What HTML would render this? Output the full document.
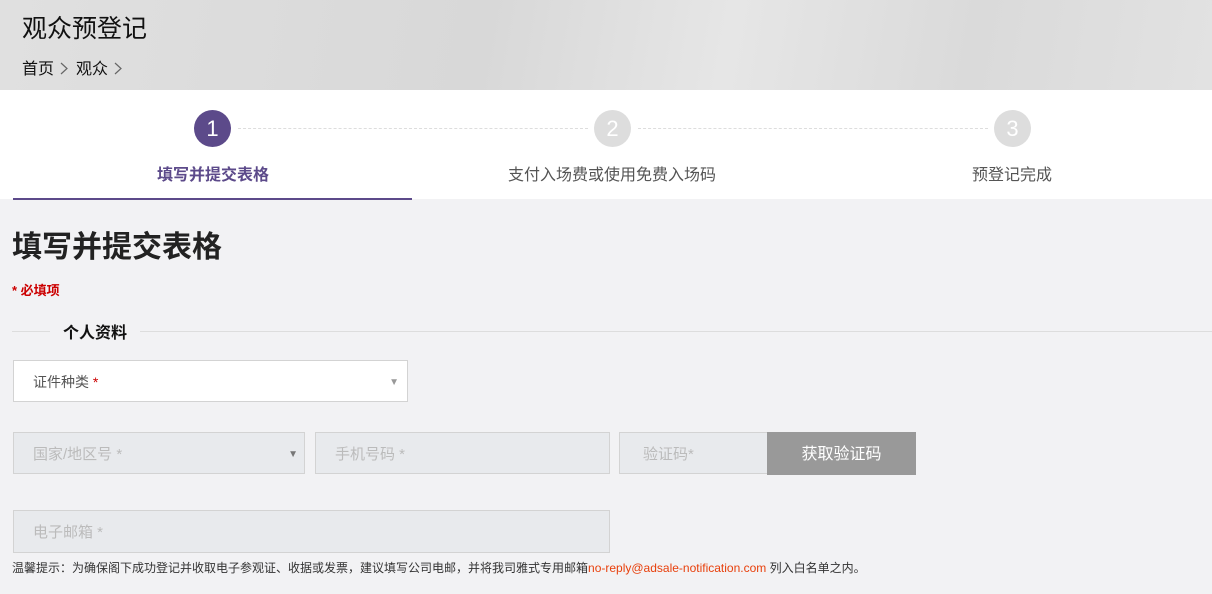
<!DOCTYPE html>
<html><head><meta charset="utf-8"><style>
*{box-sizing:border-box;margin:0;padding:0}
body{width:1212px;height:594px;overflow:hidden;background:#f2f2f4;font-family:"Liberation Sans","Noto Sans CJK SC",sans-serif;position:relative}
.hdr{position:absolute;left:0;top:0;width:1212px;height:90px;background:linear-gradient(100deg,#e0e0e0 0%,#d8d8d8 40%,#e6e6e6 60%,#dadada 80%,#e2e2e2 100%)}
.t{position:absolute;left:22px;top:9px;font-size:25px;color:#111}
.bc{position:absolute;left:22px;top:55px;font-size:16px;color:#111}
.bc svg{margin:0 8px 0 6px;vertical-align:-1px}
.steps{position:absolute;left:0;top:90px;width:1212px;height:109px;background:#fff}
.c{position:absolute;top:20px;width:37px;height:37px;border-radius:50%;background:#ddd;color:#fff;font-size:22px;text-align:center;line-height:37px}
.ln{position:absolute;top:38px;border-top:1px dashed #ddd}
.sl{position:absolute;top:71px;font-size:16px;color:#555;text-align:center;width:400px}
.f{position:absolute;border:1px solid #d3d3d3;background:#e8eaed;font-size:15px;color:#bbb;padding-left:19px;line-height:44px}
</style></head><body>
<div class="hdr"><div class="t">观众预登记</div><div class="bc">首页<svg width="8" height="13" viewBox="0 0 8 13"><path d="M1 1l6 5.5L1 12" fill="none" stroke="#666" stroke-width="1.2"/></svg>观众<svg width="8" height="13" viewBox="0 0 8 13"><path d="M1 1l6 5.5L1 12" fill="none" stroke="#666" stroke-width="1.2"/></svg></div></div>
<div class="steps">
<div class="c" style="left:194px;background:#5c4a8a">1</div>
<div class="ln" style="left:238px;width:350px"></div>
<div class="c" style="left:594px">2</div>
<div class="ln" style="left:638px;width:350px"></div>
<div class="c" style="left:994px">3</div>
<div class="sl" style="left:13px;color:#5c4a8a;font-weight:bold">填写并提交表格</div>
<div class="sl" style="left:412px">支付入场费或使用免费入场码</div>
<div class="sl" style="left:812px">预登记完成</div>
<div style="position:absolute;left:13px;top:108px;width:399px;height:2px;background:#5c4a8a"></div>
</div>
<div style="position:absolute;left:12px;top:222px;font-size:30px;font-weight:bold;color:#222">填写并提交表格</div>
<div style="position:absolute;left:12px;top:280px;font-size:13px;font-weight:bold;color:#c00">* 必填项</div>
<div style="position:absolute;left:12px;top:331px;width:1200px;border-top:1px solid #ddd"></div>
<div style="position:absolute;left:50px;top:319px;padding:0 13px;background:#f2f2f4;font-size:16px;font-weight:bold;color:#111">个人资料</div>
<div class="f" style="left:13px;top:360px;width:395px;height:42px;background:#fff;color:#555;font-size:14px;line-height:42px">证件种类 <span style="color:#c00">*</span><span style="position:absolute;right:8px;top:1px;color:#999;font-size:10px">▼</span></div>
<div class="f" style="left:13px;top:432px;width:292px;height:42px">国家/地区号 *<span style="position:absolute;right:6px;color:#777;font-size:10px">▼</span></div>
<div class="f" style="left:315px;top:432px;width:295px;height:42px">手机号码 *</div>
<div class="f" style="left:619px;top:432px;width:150px;height:42px;padding-left:23px">验证码*</div>
<div style="position:absolute;left:767px;top:432px;width:149px;height:43px;background:#999;color:#fff;font-size:16px;text-align:center;line-height:45px">获取验证码</div>
<div class="f" style="left:13px;top:510px;width:597px;height:43px">电子邮箱 *</div>
<div style="position:absolute;left:12px;top:559px;font-size:12px;color:#333">温馨提示：为确保阁下成功登记并收取电子参观证、收据或发票，建议填写公司电邮，并将我司雅式专用邮箱<span style="color:#e8400c">no-reply@adsale-notification.com</span> 列入白名单之内。</div>
</body></html>
